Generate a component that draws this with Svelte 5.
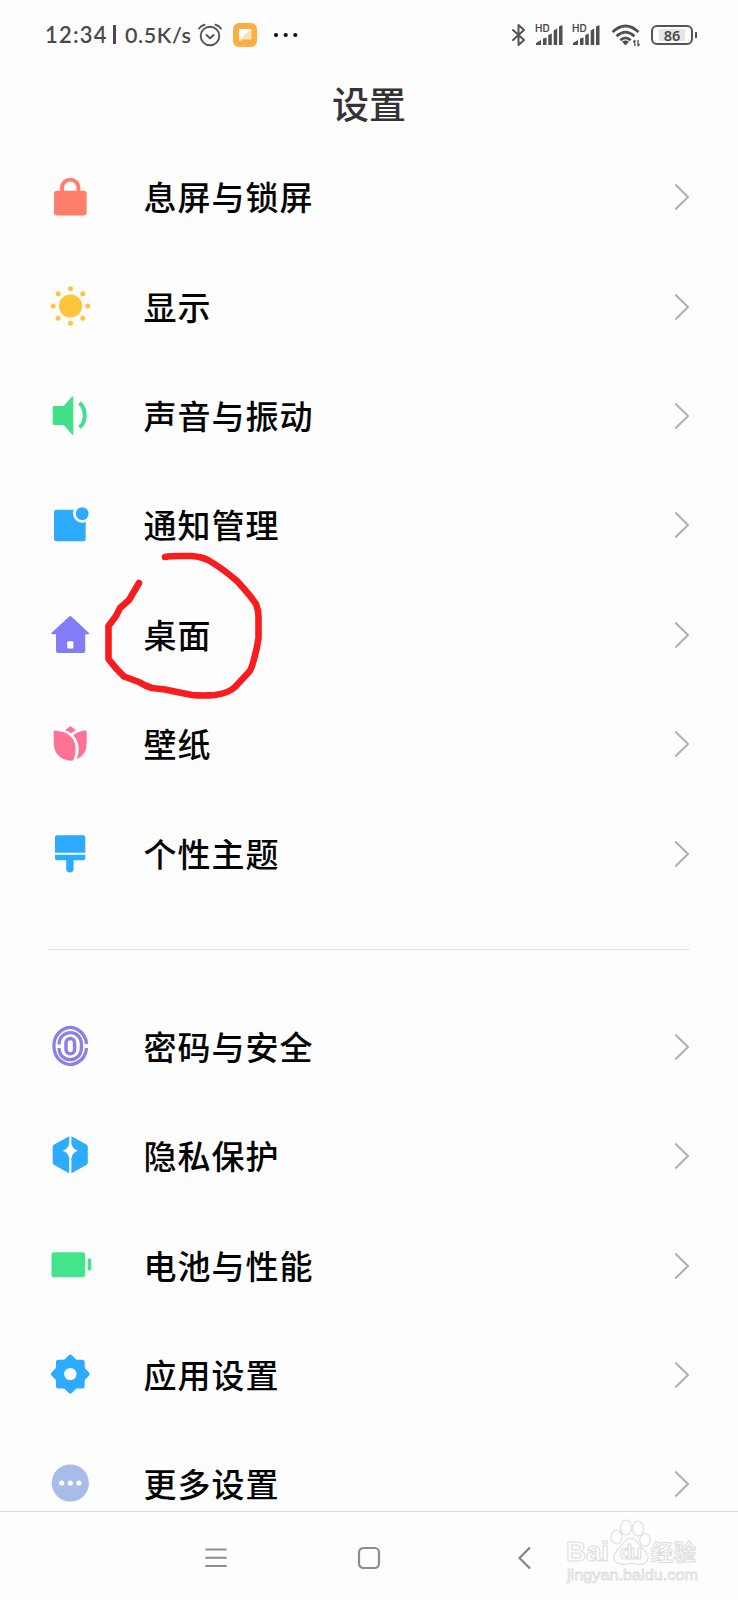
<script>
	const groups = [
		[
			{ icon: 'lock', label: '息屏与锁屏' },
			{ icon: 'sun', label: '显示' },
			{ icon: 'sound', label: '声音与振动' },
			{ icon: 'notice', label: '通知管理' },
			{ icon: 'home', label: '桌面' },
			{ icon: 'tulip', label: '壁纸' },
			{ icon: 'brush', label: '个性主题' }
		],
		[
			{ icon: 'finger', label: '密码与安全' },
			{ icon: 'privacy', label: '隐私保护' },
			{ icon: 'battery', label: '电池与性能' },
			{ icon: 'gear', label: '应用设置' },
			{ icon: 'more', label: '更多设置' }
		]
	];

	const rays = [[17.3, 0], [12.3, 12.3], [0, 17.3], [-12.3, 12.3], [-17.3, 0], [-12.3, -12.3], [0, -17.3], [12.3, -12.3]];
</script>

<div class="phone">
	<div class="status">
		<div class="status-left">
			<span class="time">12:34</span>
			<span class="bar"></span>
			<span class="speed">0.5K/s</span>
			<svg class="alarm" width="26" height="26" viewBox="0 0 26 26" fill="none" stroke="#555" stroke-width="1.9" stroke-linecap="round" stroke-linejoin="round">
				<circle cx="13" cy="14" r="9.3" />
				<path d="M9.5 13l3.5 3.2 3.7-3.2M2 6.5Q4 3.5 7.5 2.8M24 6.5Q22 3.5 18.5 2.8" />
			</svg>
			<svg class="app" width="24" height="24" viewBox="0 0 24 24">
				<rect width="24" height="24" rx="6" fill="#fdae42" />
				<path d="M6 6h12.5v10.5h-9L6 19z" fill="#fde0b5" />
				<path d="M6 6h12.5L6 17z" fill="#fff" />
			</svg>
			<svg width="26" height="6" viewBox="0 0 26 6" fill="#111">
				<circle cx="3" cy="3" r="2.1" />
				<circle cx="12.7" cy="3" r="2.1" />
				<circle cx="22.3" cy="3" r="2.1" />
			</svg>
		</div>
		<div class="status-right">
			<svg width="16" height="24" viewBox="0 0 16 24" fill="none" stroke="#555" stroke-width="2" stroke-linejoin="round" stroke-linecap="round">
				<path d="M2 7l11 10-5.5 5V2L13 7 2 17" />
			</svg>
			{#each [0, 1] as sim (sim)}
				<div class="signal">
					<span>HD</span>
					<svg width="29" height="22" viewBox="0 0 29 22" fill="#505050">
						<path d="M1 21v-2l5-3v5zM8 14.5l3.5-1V21H8zM13.3 11l3.5-1.5V21h-3.5zM18.7 6.5l3.5-2V21h-3.5zM24 2.5l3.5-1.5V21H24z" />
					</svg>
				</div>
			{/each}
			<svg class="wifi" width="30" height="24" viewBox="0 0 30 24" fill="none" stroke="#505050" stroke-width="2.7">
				<path d="M1.5 9Q14.5-3 27.5 9M5.5 13.2Q14.5 5 23.5 13.2M9.3 17.3Q14.5 12.5 19.7 17.3" />
				<path d="M11 18.8q3.5-2.8 7 0L14.5 22.6z" fill="#505050" stroke="none" />
				<path d="M23.8 17v6M27 17v6M22.3 19.2l1.5-2M28.5 21l-1.5 2" stroke-width="1.3" />
			</svg>
			<div class="charge"><span>86</span></div>
			<div class="nub"></div>
		</div>
	</div>

	<h1>设置</h1>

	<main>
		{#each groups as group, i (i)}
			{#if i > 0}
				<hr />
			{/if}
			<ul>
				{#each group as { icon, label } (label)}
					<li>
						<svg width="44" height="44" viewBox="0 0 44 44">
							{#if icon === 'lock'}
								<rect x="6" y="15.7" width="32.7" height="24.8" rx="3" fill="#ff7d6b" />
								<path d="M14 18v-5.2a8.2 8.2 0 0 1 16.4 0V18" fill="none" stroke="#ff7d6b" stroke-width="3.9" />
							{:else if icon === 'sun'}
								<g fill="#ffc43e">
									<circle cx="22.5" cy="21" r="11.6" />
									{#each rays as [x, y]}
										<circle cx={22.5 + x} cy={21 + y} r="2.5" />
									{/each}
								</g>
							{:else if icon === 'sound'}
								<path d="M6 12h9.7L24 2.6q1.3-1 1.3.8v36.4q0 1.8-1.3.8L15.7 31H6q-1.3 0-1.3-1.3V13.3Q4.7 12 6 12z" fill="#43e08b" />
								<path d="M31.5 8.8q5.2 5 5.2 12.6t-5.2 12.2" fill="none" stroke="#43e08b" stroke-width="4" />
							{:else if icon === 'notice'}
								<rect x="6" y="6.8" width="31.7" height="31.5" rx="2.5" fill="#2cabff" />
								<circle cx="34.2" cy="10.6" r="9.2" fill="#fdfdfd" />
								<circle cx="34.2" cy="10.6" r="6.4" fill="#2cabff" />
							{:else if icon === 'home'}
								<path d="M21.2 3.4q1.1-.9 2.2 0L41 20q1 1.3-.6 1.3H37.2V38q0 2-2 2H10q-2 0-2-2V21.3H4q-1.6 0-.6-1.3z" fill="#837cf8" />
								<rect x="19.2" y="28.2" width="6.2" height="7.2" rx="1.2" fill="#fff" />
							{:else if icon === 'tulip'}
								<g fill="#ff7293">
									<path d="M17 8.3L21.4 4.7q1-.7 2 0L28 8.3q-2.5 1-4.8 3-2.7-2-6.2-3z" />
									<path d="M6.8 8.4Q27.5 10 27.6 27.500q0 6-2.3 10.600-.5.7-1.5.7Q5.700 37.500 5.700 20V9.400q0-1 1.100-1z" />
									<path d="M37.600 8.400q1.100 0 1.100 1.100V21q0 12-9.900 16 5.200-14-3.600-23.700 5-4.300 12.400-4.900z" />
								</g>
							{:else if icon === 'brush'}
								<g fill="#2cabff">
									<path d="M9 3.300h26.300q2 0 2 2v15.500H7V5.300q0-2 2-2z" />
									<path d="M7 22.800h30.300v3.400q0 2-2 2H25.600v8.600q0 3.700-3.700 3.700t-3.700-3.700v-8.600H9q-2 0-2-2z" />
								</g>
							{:else if icon === 'finger'}
								<g fill="none" stroke="#8b80e6" stroke-width="3.300">
									<path d="M38.600 19A16.400 18.400 0 1 0 38.600 23" />
									<path d="M11 19.500C11.500 3.800 33 3.800 33.400 19v4c-.4 15.500-22 15.500-22.400 0" />
									<rect x="18" y="13.500" width="8.600" height="15.200" rx="4.300" stroke-width="3.500" />
								</g>
							{:else if icon === 'privacy'}
								<path d="M20.700 2.600q1.600-.8 3.200 0l14.400 8q1.500.9 1.500 2.600v15.200q0 1.700-1.500 2.600L24 38.900q-1.700.8-3.400 0L6.200 31q-1.500-.9-1.500-2.600V13.200q0-1.700 1.500-2.600z" fill="#2cabff" />
								<path d="M21.200 1h2.200v8.500q1.200 6 6.600 7.300-5.400 1.300-6.600 7.300V41h-2.200V24.100q-1.200-6-6.600-7.300 5.400-1.300 6.600-7.300z" fill="#fff" />
							{:else if icon === 'battery'}
								<rect x="3.500" y="8.200" width="33.600" height="25" rx="2.500" fill="#43e48b" />
								<rect x="39.700" y="14.500" width="3.600" height="12" rx="1.300" fill="#43e48b" />
							{:else if icon === 'gear'}
								<g fill="#2cabff" stroke="#2cabff" stroke-width="5" stroke-linejoin="round">
									<rect x="10.400" y="9.200" width="23.800" height="23.800" />
									<rect x="10.400" y="9.200" width="23.800" height="23.800" transform="rotate(45 22.300 21.100)" />
								</g>
								<circle cx="22.300" cy="21.100" r="6.200" fill="#fff" />
							{:else}
								<circle cx="22.300" cy="21" r="18.600" fill="#a8bce9" />
								<g fill="#fff">
									<circle cx="13.700" cy="21" r="2.600" />
									<circle cx="22.300" cy="21" r="2.600" />
									<circle cx="30.900" cy="21" r="2.600" />
								</g>
							{/if}
						</svg>
						<span class="label">{label}</span>
						<svg class="chevron" width="16" height="28" viewBox="0 0 16 28" fill="none" stroke="#b2b2b2" stroke-width="2.200" stroke-linecap="round" stroke-linejoin="round">
							<path d="M2 2.200L14 14 2 25.800" />
						</svg>
					</li>
				{/each}
			</ul>
		{/each}
	</main>

	<nav>
		<svg width="24" height="24" viewBox="0 0 24 24" stroke="#8c8c8c" stroke-width="2">
			<path d="M1.500 3.500h21M1.500 11.800h21M1.500 20h21" />
		</svg>
		<svg width="24" height="24" viewBox="0 0 24 24" fill="none" stroke="#8c8c8c" stroke-width="2.200">
			<rect x="2" y="2" width="20" height="20" rx="4.500" />
		</svg>
		<svg width="24" height="24" viewBox="0 0 24 24" fill="none" stroke="#858585" stroke-width="2.200">
			<path d="M20 1.500L9.500 12 20 22.500" />
		</svg>
	</nav>

	<svg class="watermark" width="150" height="76" viewBox="0 0 150 76" fill="#fdfdfd" stroke="#dedede" stroke-width="1.100">
		<text x="6" y="44" font-size="28" font-weight="700" textLength="43">Bai</text>
		<ellipse cx="56.500" cy="20" rx="5.500" ry="7" />
		<ellipse cx="66" cy="10.500" rx="5.500" ry="7.500" />
		<ellipse cx="78" cy="11.500" rx="5.500" ry="7.500" />
		<ellipse cx="85" cy="23" rx="5.300" ry="6.500" />
		<path d="M71 21c5 0 7 5 10 9 4 4 7 6 7 10 0 8-8 8-12 7q-5-1-10 0c-5 1-12 0-12-7 0-4 4-7 7-11 3-3 5-8 10-8z" />
		<text x="60" y="42" font-size="20" font-weight="700" textLength="22">du</text>
		<text class="cjk" x="91" y="42.500" font-size="22" font-weight="700" textLength="45">经验</text>
		<text x="7" y="63" font-size="14" stroke-width=".8" textLength="131" lengthAdjust="spacingAndGlyphs">jingyan.baidu.com</text>
	</svg>

	<svg class="mark" width="170" height="160" viewBox="100 545 170 160" fill="none" stroke="#f81c1e" stroke-width="6.600" stroke-linecap="round" stroke-linejoin="round">
		<path d="M165 557Q170 556 180 556H192Q202 557 208 560 222 568 237 581 250 595 256 604 258.500 610 258.500 617V638Q257 649 254 659 251 671 248 673L235 687Q229 693 215 695 203 696 192 695L182 693 165 689.500 152 688Q145 686 139 682L124 676.500Q116 669 108.500 659V626L116 616 120 608 129 600 139 583" />
	</svg>
</div>

<style>
	:global(body) {
		background: #fdfdfd;
	}

	.phone {
		position: relative;
		display: flex;
		flex-direction: column;
		width: 738px;
		height: 1600px;
		overflow: hidden;
		background: #fdfdfd;
		font-family: "Noto Sans CJK SC", sans-serif;
	}

	svg {
		display: block;
		flex: none;
	}

	.status {
		display: flex;
		justify-content: space-between;
		align-items: center;
		height: 69px;
		padding: 0 41px 0 45px;
		box-sizing: border-box;
		color: #4a4a4c;
		font-family: Lato, sans-serif;
		font-weight: 600;
	}

	.status-left,
	.status-right {
		display: flex;
		align-items: center;
	}

	.time {
		width: 62px;
		font-size: 22px;
		letter-spacing: 1.200px;
	}

	.bar {
		width: 3px;
		height: 19px;
		margin: 0 9px 0 6px;
		background: #4a4a4c;
	}

	.speed {
		width: 69px;
		font-size: 21.500px;
		letter-spacing: .600px;
	}

	.alarm {
		margin: 0 10px 0 3px;
	}

	.app {
		margin-right: 16px;
	}

	.signal {
		position: relative;
		margin-left: 8px;
	}

	.signal span {
		position: absolute;
		top: -1px;
		left: 0;
		font: 600 10px/10px Inter, sans-serif;
	}

	.wifi {
		margin: 0 10px 0 10px;
	}

	.charge {
		display: flex;
		align-items: center;
		justify-content: center;
		width: 42px;
		height: 20px;
		box-sizing: border-box;
		border: 2px solid #555;
		border-radius: 6px;
		font: 600 14.500px/16px "Noto Sans", sans-serif;
	}

	.charge span {
		height: 12px;
		padding: 0 5px;
		background: #e6e6e6;
		line-height: 12px;
	}

	.nub {
		width: 2px;
		height: 6px;
		margin-left: 2px;
		background: #555;
	}

	h1 {
		height: 73.600px;
		margin: 0;
		color: #333335;
		font-size: 37px;
		font-weight: 500;
		line-height: 69px;
		text-align: center;
	}

	main {
		flex: 1;
		min-height: 0;
		overflow: hidden;
	}

	ul {
		margin: 0;
		padding: 0;
		list-style: none;
	}

	li {
		display: flex;
		align-items: center;
		height: 109.400px;
		padding: 0 48px;
	}

	.label {
		flex: 1;
		margin-left: 51.500px;
		padding-bottom: 2px;
		color: #050505;
		font-size: 33px;
		font-weight: 500;
		letter-spacing: 1px;
		line-height: 48px;
	}

	hr {
		height: 1px;
		margin: 40.600px 48px 42.300px;
		border: 0;
		background: #e2e2e2;
	}

	nav {
		display: flex;
		align-items: center;
		justify-content: center;
		gap: 129px;
		height: 89px;
		box-sizing: border-box;
		padding-top: 3px;
		border-top: 1px solid #dcdcdc;
	}

	.watermark {
		position: absolute;
		left: 560px;
		top: 1517px;
		font-family: "Liberation Sans", sans-serif;
	}

	.cjk {
		font-family: "Noto Sans CJK SC", sans-serif;
	}

	.mark {
		position: absolute;
		left: 100px;
		top: 545px;
	}
</style>
